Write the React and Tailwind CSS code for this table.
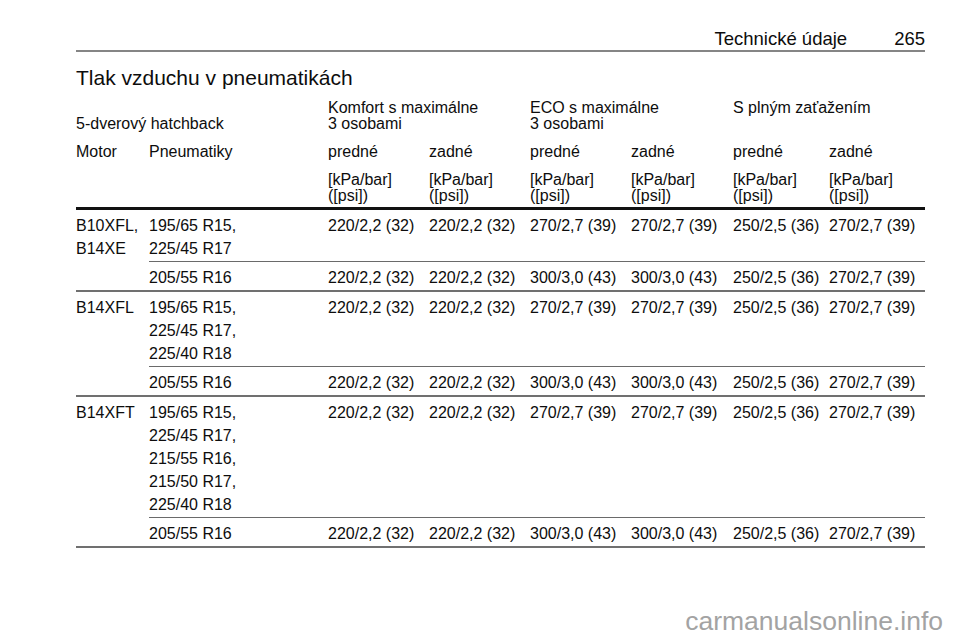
const cols = 'grid grid-cols-[179px_101px_101px_101px_102px_96px_96px]';

const groups = [
  {
    motor: ['B10XFL,', 'B14XE'],
    rows: [
      { tyres: ['195/65 R15,', '225/45 R17'], values: ['220/2,2 (32)', '220/2,2 (32)', '270/2,7 (39)', '270/2,7 (39)', '250/2,5 (36)', '270/2,7 (39)'] },
      { tyres: ['205/55 R16'], values: ['220/2,2 (32)', '220/2,2 (32)', '300/3,0 (43)', '300/3,0 (43)', '250/2,5 (36)', '270/2,7 (39)'] },
    ],
  },
  {
    motor: ['B14XFL'],
    rows: [
      { tyres: ['195/65 R15,', '225/45 R17,', '225/40 R18'], values: ['220/2,2 (32)', '220/2,2 (32)', '270/2,7 (39)', '270/2,7 (39)', '250/2,5 (36)', '270/2,7 (39)'] },
      { tyres: ['205/55 R16'], values: ['220/2,2 (32)', '220/2,2 (32)', '300/3,0 (43)', '300/3,0 (43)', '250/2,5 (36)', '270/2,7 (39)'] },
    ],
  },
  {
    motor: ['B14XFT'],
    rows: [
      { tyres: ['195/65 R15,', '225/45 R17,', '215/55 R16,', '215/50 R17,', '225/40 R18'], values: ['220/2,2 (32)', '220/2,2 (32)', '270/2,7 (39)', '270/2,7 (39)', '250/2,5 (36)', '270/2,7 (39)'] },
      { tyres: ['205/55 R16'], values: ['220/2,2 (32)', '220/2,2 (32)', '300/3,0 (43)', '300/3,0 (43)', '250/2,5 (36)', '270/2,7 (39)'] },
    ],
  },
];

function Lines({ items }) {
  return (
    <div>
      {items.map((t) => (
        <div key={t}>{t}</div>
      ))}
    </div>
  );
}

export default function App() {
  return (
    <div className="relative h-[642px] w-[960px] overflow-hidden bg-white font-['Liberation_Sans',Arial,sans-serif] text-[#0d0d0d]">
      <div className="ml-[76px] w-[849px]">
        {/* running header */}
        <div className="flex items-end justify-end gap-[47px] border-b-2 border-[#858585] pt-[28px] text-[18.5px] leading-[22px]">
          <span>Technické údaje</span>
          <span>265</span>
        </div>

        <h1 className="mt-[13px] text-[21px] leading-[26px]">Tlak vzduchu v pneumatikách</h1>

        {/* table head */}
        <div className="mt-[9px] border-b-[3px] border-[#111] pb-[3px] text-[16px] leading-[16px]">
          <div className="grid grid-cols-[73px_179px_202px_203px_192px] items-end">
            <div className="col-span-2">5-dverový hatchback</div>
            <Lines items={['Komfort s maximálne', '3 osobami']} />
            <Lines items={['ECO s maximálne', '3 osobami']} />
            <div className="self-start">S plným zaťažením</div>
          </div>
          <div className="mt-[12px] grid grid-cols-[73px_179px_101px_101px_101px_102px_96px_96px]">
            <div>Motor</div>
            <div>Pneumatiky</div>
            <div>predné</div>
            <div>zadné</div>
            <div>predné</div>
            <div>zadné</div>
            <div>predné</div>
            <div>zadné</div>
          </div>
          <div className="mt-[12px] grid grid-cols-[73px_179px_101px_101px_101px_102px_96px_96px]">
            <div />
            <div />
            {[0, 1, 2, 3, 4, 5].map((i) => (
              <Lines key={i} items={['[kPa/bar]', '([psi])']} />
            ))}
          </div>
        </div>

        {/* table body */}
        {groups.map((g) => (
          <div key={g.motor[0]} className="flex border-b-2 border-[#707070] text-[16px] leading-[23px]">
            <div className="w-[73px] pt-[4px]">
              <Lines items={g.motor} />
            </div>
            <div className="flex-1">
              {g.rows.map((r, i) => (
                <div
                  key={i}
                  className={`${cols} pt-[4px] pb-[1px] ${i === 0 ? 'border-b border-[#6a6a6a]' : ''}`}
                >
                  <Lines items={r.tyres} />
                  {r.values.map((v, j) => (
                    <div key={j}>{v}</div>
                  ))}
                </div>
              ))}
            </div>
          </div>
        ))}
      </div>

      <div className="mt-[57px] pr-[17px] text-right text-[26.5px] leading-[32px] text-[#a3a3a3]">
        carmanualsonline.info
      </div>
    </div>
  );
}
